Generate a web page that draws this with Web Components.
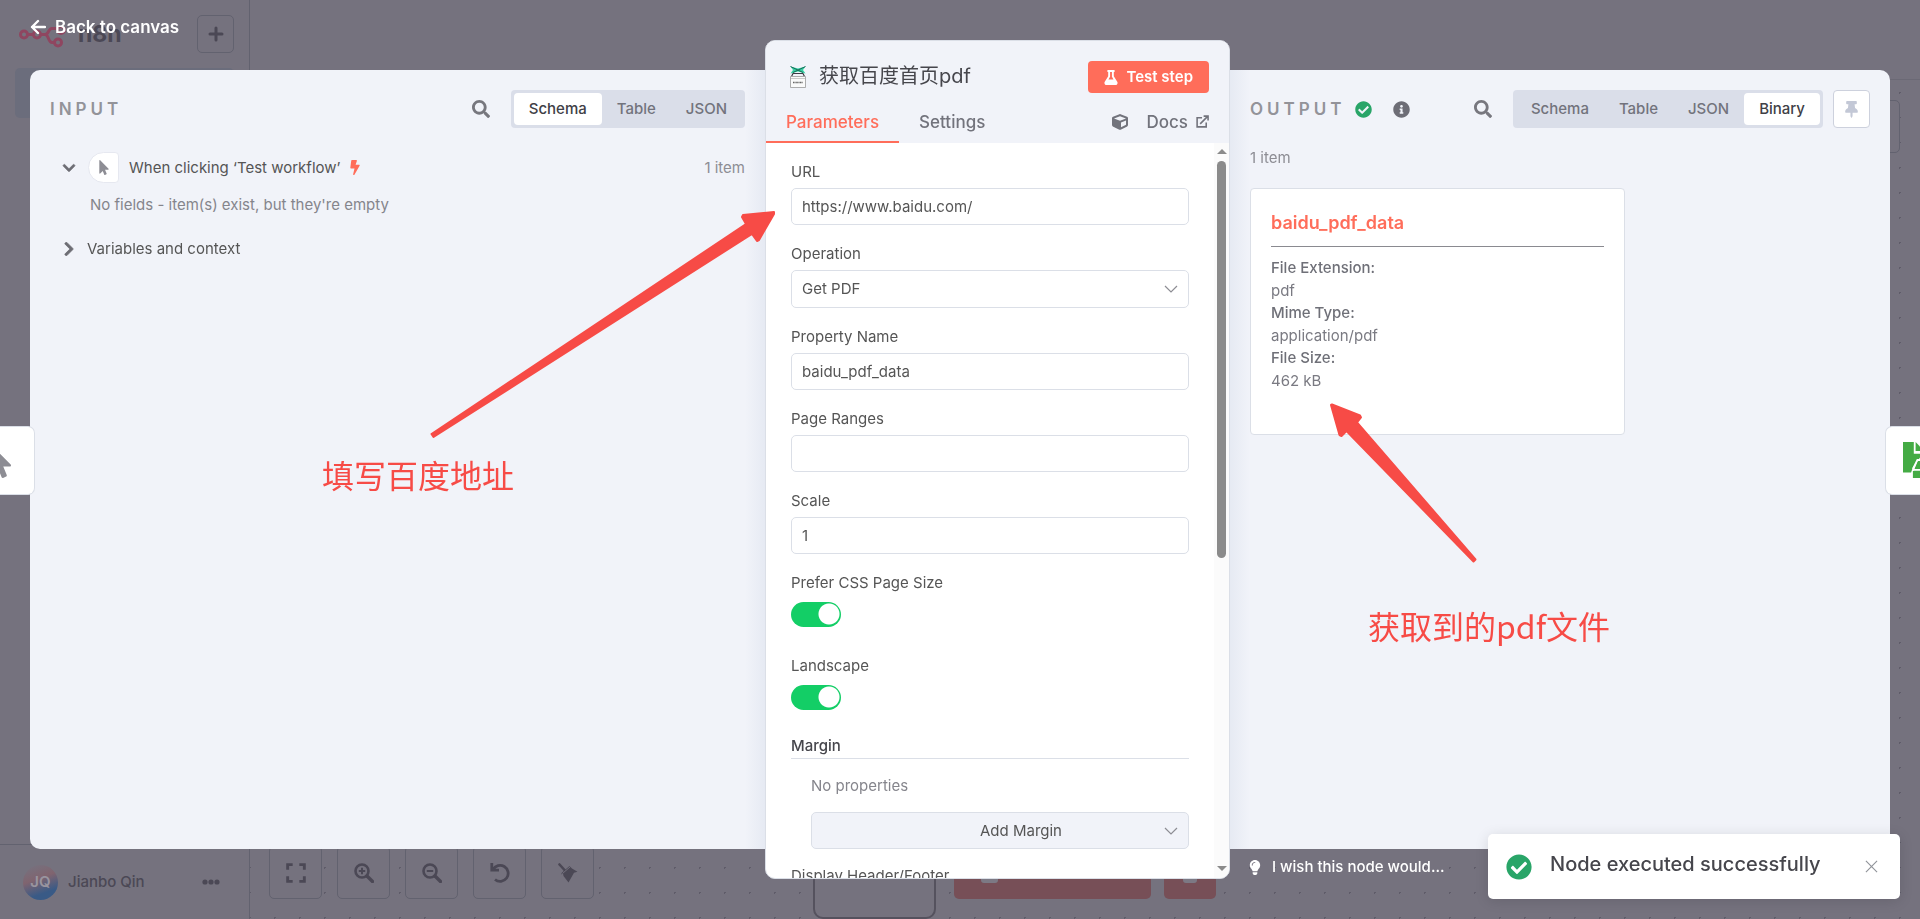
<!DOCTYPE html>
<html lang="en">
<head>
<meta charset="utf-8">
<title>n8n</title>
<style>
  html, body {
    height: 100%;
    margin: 0;
  }

  body {
    font-family: Inter, "Noto Sans CJK SC", sans-serif;
    font-size: 15px;
    line-height: 20px;
    color: #555;
    background: #75727e;
    overflow: hidden;
    --primary: #ff6d5a;
    --border: #dbdfe7;
    --pane: #f1f3f9;
    --dim: #75727e;
    --dim-line: #62626f;
    --dim-ink: #4b4855;
  }
</style>
</head>
<body>
<app-shell></app-shell>
<node-details></node-details>
<toast-message>Node executed successfully</toast-message>

<script>
const ICONS = {
  search: ["0 0 512 512", '<path d="M505 442.7L405.3 343c-4.5-4.5-10.6-7-17-7H372c27.6-35.3 44-79.7 44-128C416 93.1 322.9 0 208 0S0 93.1 0 208s93.1 208 208 208c48.3 0 92.7-16.4 128-44v16.3c0 6.4 2.5 12.5 7 17l99.7 99.7c9.4 9.4 24.6 9.4 33.9 0l28.3-28.3c9.4-9.4 9.4-24.6.1-34zM208 336c-70.7 0-128-57.2-128-128 0-70.7 57.2-128 128-128 70.7 0 128 57.2 128 128 0 70.7-57.2 128-128 128z"/>'],
  check: ["0 0 512 512", '<path d="M504 256c0 136.967-111.033 248-248 248S8 392.967 8 256 119.033 8 256 8s248 111.033 248 248zM227.314 387.314l184-184c6.248-6.248 6.248-16.379 0-22.627l-22.627-22.627c-6.248-6.249-16.379-6.249-22.628 0L216 308.118l-70.059-70.059c-6.248-6.248-16.379-6.248-22.628 0l-22.627 22.627c-6.248 6.248-6.248 16.379 0 22.627l104 104c6.249 6.249 16.379 6.249 22.628.001z"/>'],
  info: ["0 0 512 512", '<path d="M256 8C119.043 8 8 119.083 8 256c0 136.997 111.043 248 248 248s248-111.003 248-248C504 119.083 392.957 8 256 8zm0 110c23.196 0 42 18.804 42 42s-18.804 42-42 42-42-18.804-42-42 18.804-42 42-42zm56 254c0 6.627-5.373 12-12 12h-88c-6.627 0-12-5.373-12-12v-24c0-6.627 5.373-12 12-12h12v-64h-12c-6.627 0-12-5.373-12-12v-24c0-6.627 5.373-12 12-12h64c6.627 0 12 5.373 12 12v100h12c6.627 0 12 5.373 12 12v24z"/>'],
  flask: ["0 0 448 512", '<path d="M437.2 403.5L320 215V64h8c13.3 0 24-10.7 24-24V24c0-13.3-10.7-24-24-24H120c-13.3 0-24 10.7-24 24v16c0 13.3 10.7 24 24 24h8v151L10.8 403.5C-18.5 450.6 15.3 512 70.9 512h306.2c55.7 0 89.4-61.5 60.1-108.5zM137.9 320l48.2-77.6c3.7-5.2 5.8-11.6 5.8-18.4V64h64v160c0 6.9 2.2 13.2 5.8 18.4l48.2 77.6h-172z"/>'],
  bolt: ["0 0 320 512", '<path d="M296 160H180.6l42.6-129.8C227.2 15 215.7 0 200 0H56C44 0 33.8 8.9 32.2 20.8l-32 240C-1.7 275.2 9.5 288 24 288h118.7L96.6 482.5c-3.6 15.2 8 29.5 23.3 29.5 8.4 0 16.4-4.4 20.8-12l176-304c9.3-15.9-2.2-36-20.7-36z"/>'],
  pointer: ["0 0 320 512", '<path d="M302.189 329.126H196.105l55.831 135.993c3.889 9.428-.555 19.999-9.444 23.999l-49.165 21.427c-9.165 4-19.443-.571-23.332-9.714l-53.053-129.136-86.664 89.138C18.729 472.71 0 463.554 0 447.977V18.299C0 1.899 19.921-6.096 30.277 5.443l284.412 292.542c11.472 11.179 3.007 31.141-12.5 31.141z"/>'],
  cube: ["0 0 512 512", '<path d="M239.1 6.3l-208 78c-18.7 7-31.1 25-31.1 45v225.1c0 18.2 10.3 34.8 26.5 42.9l208 104c13.5 6.8 29.4 6.8 42.9 0l208-104c16.3-8.1 26.5-24.8 26.5-42.9V129.3c0-20-12.4-37.9-31.1-44.9l-208-78C262 2.2 250 2.2 239.1 6.3zM256 68.4l192 72v1.1l-192 78-192-78v-1.1l192-72zm32 356V275.5l160-65v133.9l-160 80z"/>'],
  pin: ["0 0 384 512", '<path d="M298.028 214.267L285.793 96H328c13.255 0 24-10.745 24-24V24c0-13.255-10.745-24-24-24H56C42.745 0 32 10.745 32 24v48c0 13.255 10.745 24 24 24h42.207L85.972 214.267C37.465 236.82 0 277.261 0 328c0 13.255 10.745 24 24 24h136v104.007c0 1.242.289 2.467.845 3.578l24 48c2.941 5.882 11.364 5.893 14.311 0l24-48a8.008 8.008 0 0 0 .845-3.578V352h136c13.255 0 24-10.745 24-24-.001-51.183-37.983-91.42-85.973-113.733z"/>'],
  bulb: ["0 0 352 512", '<path d="M96.06 454.35c.01 6.29 1.87 12.45 5.36 17.69l17.09 25.69a31.99 31.99 0 0 0 26.64 14.28h61.71a31.99 31.99 0 0 0 26.64-14.28l17.09-25.69a31.989 31.989 0 0 0 5.36-17.69l.04-38.35H96.01l.05 38.35zM0 176c0 44.37 16.45 84.85 43.56 115.78 16.52 18.85 42.36 58.23 52.21 91.45.04.26.07.52.11.78h160.24c.04-.26.07-.51.11-.78 9.85-33.22 35.69-72.6 52.21-91.45C335.55 260.85 352 220.37 352 176 352 78.61 272.91-.3 175.45 0 73.44.31 0 82.97 0 176zm176-80c-44.11 0-80 35.89-80 80 0 8.84-7.16 16-16 16s-16-7.16-16-16c0-61.76 50.24-112 112-112 8.84 0 16 7.16 16 16s-7.16 16-16 16z"/>'],
  down: ["0 0 448 512", '<path d="M207.029 381.476L12.686 187.132c-9.373-9.373-9.373-24.569 0-33.941l22.667-22.667c9.357-9.357 24.522-9.375 33.901-.04L224 284.505l154.745-154.021c9.379-9.335 24.544-9.317 33.901.04l22.667 22.667c9.373 9.373 9.373 24.569 0 33.941L240.971 381.476c-9.373 9.372-24.569 9.372-33.942 0z" stroke="currentColor" stroke-width="24"/>'],
  right: ["0 0 512 448", '<path transform="rotate(-90 224 224)" d="M207.029 381.476L12.686 187.132c-9.373-9.373-9.373-24.569 0-33.941l22.667-22.667c9.357-9.357 24.522-9.375 33.901-.04L224 284.505l154.745-154.021c9.379-9.335 24.544-9.317 33.901.04l22.667 22.667c9.373 9.373 9.373 24.569 0 33.941L240.971 381.476c-9.373 9.372-24.569 9.372-33.942 0z" stroke="currentColor" stroke-width="24"/>'],
  back: ["0 0 16 16", '<path d="M8 2L2 8l6 6M2 8h13" fill="none" stroke="currentColor" stroke-width="2.4" stroke-linecap="round" stroke-linejoin="round"/>'],
  external: ["0 0 14 14", '<path d="M6.5 3H1.2v9.800h9.800V8M4.500 9.500L12 2M8.200 1.200h4.800V6" fill="none" stroke="currentColor" stroke-width="1.700"/>'],
  caret: ["0 0 14 8", '<path d="M1 1l6 6 6-6" fill="none" stroke="currentColor" stroke-width="1.200"/>'],
  close: ["0 0 14 14", '<path d="M1 1l12 12M13 1L1 13" fill="none" stroke="currentColor" stroke-width="1.200"/>'],
  plus: ["0 0 16 16", '<path d="M8 2v12M2 8h12" stroke="currentColor" stroke-width="3" stroke-linecap="round"/>'],
  fit: ["0 0 18 18", '<path d="M1.500 6V1.500H6M12 1.500h4.500V6M16.500 12v4.500H12M6 16.500H1.500V12" fill="none" stroke="currentColor" stroke-width="2.600"/>'],
  zoomIn: ["0 0 20 20", '<path d="M13 13l5.500 5.500" stroke="currentColor" stroke-width="3.400" stroke-linecap="round"/><circle cx="8" cy="8" r="6.500" fill="none" stroke="currentColor" stroke-width="2.600"/><path d="M8 4.800v6.400M4.800 8h6.400" stroke="currentColor" stroke-width="2"/>'],
  zoomOut: ["0 0 20 20", '<path d="M13 13l5.500 5.500" stroke="currentColor" stroke-width="3.400" stroke-linecap="round"/><circle cx="8" cy="8" r="6.500" fill="none" stroke="currentColor" stroke-width="2.600"/><path d="M4.800 8h6.400" stroke="currentColor" stroke-width="2"/>'],
  undo: ["0 0 20 20", '<path d="M1.800 0v7.200H9M3 6.800A8 8 0 1 1 5 16.500" fill="none" stroke="currentColor" stroke-width="2.800"/><path d="M1 3l5 5H1z"/>'],
  tidy: ["0 0 20 20", '<path d="M1.500 1.500l5 5.500" stroke="currentColor" stroke-width="2.600" stroke-linecap="round"/><path d="M4 9.500L11.500 3l2.500 2.500 5.500 3.300-3.500 1-5.500 9.700-5-6.500-.5-2.500-2 1z"/><path d="M4.500 10.500l8-7" stroke="#75727e" stroke-width="1"/>'],
  dots: ["0 0 18 6", '<circle cx="3" cy="3" r="2.600"/><circle cx="9" cy="3" r="2.600"/><circle cx="15" cy="3" r="2.600"/>'],
  browser: ["0 0 16 22", '<path d="M.5.5L8 2.500 15.500.5 13 4l2.500 3.500L8 5.500.5 7.500 3 4z" fill="#35cfa2"/><path d="M.5.500L13 6.500M15.500.500L3 6.500" stroke="#1b6b58" stroke-width="1"/><path d="M1.500 10.500L3 7.500h10l1.500 3" fill="none" stroke="#3c3c44" stroke-width="1.200"/><path d="M.5 10.500h15v11H.5z" fill="#fafafa" stroke="#999" stroke-width=".8"/><path d="M.5 12.500h15" stroke="#aaa" stroke-width=".6"/><path d="M3 16.500h10" stroke="#666" stroke-width="1.300" stroke-dasharray="1 .4"/>'],
  logo: ["0 0 48 22", '<g fill="none" stroke="currentColor" stroke-width="3"><circle cx="5" cy="7.500" r="3.500"/><circle cx="18" cy="7.500" r="3.500"/><circle cx="39" cy="15.500" r="3.500"/><circle cx="42" cy="3" r="3.500"/><path d="M8.500 7.500h6M21.500 7.500H26c4 0 3-6 7-6h5M26 7.500c4 0 3 8 7 8h2.500"/></g>'],
  file: ["0 0 40 40", '<g fill="#44ab44"><path d="M0 0h12v13h10l-5 7-6 8-2 6H0z"/><path d="M14 0l10 10H14z"/><path d="M12 32l5-13h24v21H11v-8z"/></g><path d="M11 30l5-10h25M11 31h30" fill="none" stroke="#fff" stroke-width="2"/>']
};

// fill a shadow root with the given styles and markup
function render(host, css, html) {
  const root = host.attachShadow({ mode: "open" });
  root.innerHTML = `<style>* { box-sizing: border-box; } button, input, select { font: inherit; color: inherit; margin: 0; } ${css}</style>${html}`;
  return root;
}

class UiIcon extends HTMLElement {
  constructor() {
    super();
    this.attachShadow({ mode: "open" });
  }

  connectedCallback() {
    const [box, shape] = ICONS[this.getAttribute("name")];
    this.shadowRoot.innerHTML = `
      <style>
        :host { display: inline-flex; width: 18px; height: 18px; flex: none; }
        svg { width: 100%; height: 100%; fill: currentColor; }
      </style>
      <svg viewBox="${box}" aria-hidden="true">${shape}</svg>`;
  }
}
customElements.define("ui-icon", UiIcon);

/* page behind the dialog */
class AppShell extends HTMLElement {
  constructor() {
    super();
    render(this, `
      :host { display: grid; grid-template-columns: 250px 1fr; height: 100%; color: var(--dim-ink); }
      aside { display: flex; flex-direction: column; border-right: 1px solid var(--dim-line); min-width: 0; }
      .brand { display: flex; align-items: center; padding: 15px 15px 15px 19px; height: 68px; }
      .brand ui-icon { width: 48px; height: 22px; color: #8f4660; margin-top: 8px; }
      .brand b { flex: 1; margin-left: 11px; font-size: 23px; line-height: 38px; }
      .brand button { width: 37px; height: 38px; }
      .brand button ui-icon { width: 16px; height: 16px; color: inherit; margin: 0; }
      button { display: grid; place-items: center; background: none; border: 1px solid var(--dim-line); border-radius: 5px; padding: 0; }
      .current { height: 50px; margin: 0 15px; background: #6b6d7c; border-radius: 5px; }
      .user { margin-top: auto; height: 75px; border-top: 1px solid var(--dim-line); display: flex; align-items: center; gap: 10px; padding: 0 29px 0 23px; font-weight: 500; }
      .user i { width: 35px; height: 35px; border-radius: 50%; background: linear-gradient(160deg, #77707d 10%, #80646f 40%, #395a86 75%); display: grid; place-items: center; color: #99949f; font-style: normal; font-weight: 600; }
      .user span { flex: 1; }
      .user ui-icon { width: 18px; height: 6px; }
      main { display: flex; flex-direction: column; min-width: 0; }
      header { height: 80px; border-bottom: 1px solid #6b6975; }
      .canvas { flex: 1; display: flex; align-items: flex-end; position: relative; padding: 0 0 20px 19px; background: radial-gradient(circle, #5f5c69 1px, transparent 1px) 12px 0 / 25px 25px; }
      nav { display: flex; gap: 15px; }
      nav button { width: 53px; height: 53px; background: var(--dim); }
      nav ui-icon { width: 20px; height: 20px; }
      .node { position: absolute; left: 563px; bottom: 0; width: 123px; height: 120px; border: 2px solid #55525e; border-radius: 10px; background: var(--dim); }
      .run { position: absolute; left: 704px; bottom: 20px; display: flex; gap: 13px; }
      .run button { width: 197px; height: 52px; padding: 0 27px; border: 0; background: #774f57; justify-items: start; }
      .run button + button { width: 52px; padding: 0 19px; }
      .run i { width: 17px; height: 20px; border-radius: 3px; background: #7c7984; }
      .run button + button i { width: 14px; }
      .add { position: absolute; right: 20px; top: 20px; width: 53px; height: 53px; }
    `, `
      <aside>
        <div class="brand"><ui-icon name="logo"></ui-icon><b>n8n</b><button aria-label="Add"><ui-icon name="plus"></ui-icon></button></div>
        <div class="current"></div>
        <div class="user"><i>JQ</i><span>Jianbo Qin</span><ui-icon name="dots"></ui-icon></div>
      </aside>
      <main>
        <header></header>
        <div class="canvas">
          <nav>
            <button aria-label="Fit view"><ui-icon name="fit"></ui-icon></button>
            <button aria-label="Zoom in"><ui-icon name="zoomIn"></ui-icon></button>
            <button aria-label="Zoom out"><ui-icon name="zoomOut"></ui-icon></button>
            <button aria-label="Reset zoom"><ui-icon name="undo"></ui-icon></button>
            <button aria-label="Tidy up"><ui-icon name="tidy"></ui-icon></button>
          </nav>
          <div class="node"></div>
          <div class="run"><button aria-label="Test workflow"><i></i></button><button aria-label="Delete execution"><i></i></button></div>
          <button class="add" aria-label="Open nodes panel"></button>
        </div>
      </main>`);
  }
}
customElements.define("app-shell", AppShell);

/* Schema / Table / JSON switch */
class ViewSwitch extends HTMLElement {
  connectedCallback() {
    const active = this.getAttribute("active");
    const items = this.getAttribute("items").split(",");
    render(this, `
      :host { display: flex; height: 38px; padding: 3px; border-radius: 4px; background: #dadee9; }
      button { border: 0; background: none; border-radius: 4px; padding: 0 15px; font-weight: 500; color: #72737c; }
      button[aria-pressed="true"] { background: #fff; color: #404046; }
    `, items.map(t => `<button aria-pressed="${t === active}">${t}</button>`).join(""));
  }
}
customElements.define("view-switch", ViewSwitch);

class DataPane extends HTMLElement {
  connectedCallback() {
    render(this, `
      :host { display: block; padding: 20px; min-width: 0; }
      header { display: flex; align-items: center; height: 38px; }
      h2 { margin: 0; font-size: 17px; font-weight: 600; letter-spacing: 4px; color: #939399; }
      .find { border: 0; background: none; padding: 0; margin-left: auto; margin-right: 21px; display: flex; color: #77777e; }
    `, `
      <header>
        <h2>${this.getAttribute("heading")}</h2>
        <slot name="status"></slot>
        <button class="find" aria-label="Search"><ui-icon name="search"></ui-icon></button>
        <slot name="tools"></slot>
      </header>
      <slot></slot>`);
  }
}
customElements.define("data-pane", DataPane);

class SchemaTree extends HTMLElement {
  constructor() {
    super();
    render(this, `
      :host { display: block; padding: 24px 0 0 11px; }
      .row { display: flex; align-items: center; }
      .chev { width: 16px; height: 14px; color: #6d6d74; }
      .node { width: 31px; height: 31px; margin: 0 10px 0 11px; display: grid; place-items: center; background: #fff; border: 1px solid #e6e8f0; border-radius: 16px 4px 4px 16px; color: #8d8d94; }
      .node ui-icon { width: 10px; height: 15px; }
      .bolt { width: 10px; height: 15px; margin-left: 10px; color: var(--primary); }
      .count { margin-left: auto; color: #8d8d94; }
      p { margin: 12px 0 24px 29px; color: #85858c; }
      .vars { margin-left: 10px; }
    `, `
      <div class="row">
        <ui-icon class="chev" name="down"></ui-icon>
        <div class="node"><ui-icon name="pointer"></ui-icon></div>
        <span>When clicking ‘Test workflow’</span>
        <ui-icon class="bolt" name="bolt"></ui-icon>
        <span class="count">1 item</span>
      </div>
      <p>No fields - item(s) exist, but they're empty</p>
      <div class="row"><ui-icon class="chev" name="right"></ui-icon><span class="vars">Variables and context</span></div>`);
  }
}
customElements.define("schema-tree", SchemaTree);

class BinaryCard extends HTMLElement {
  connectedCallback() {
    render(this, `
      :host { display: block; max-width: 375px; height: 247px; padding: 20px; background: #fff; border: 1px solid var(--border); border-radius: 4px; color: #7a7a82; }
      h3 { margin: 0 0 10px; padding: 3px 0 12px; font-size: 18px; line-height: 22px; font-weight: 600; color: var(--primary); border-bottom: 1px solid #8a8a90; }
      dl { margin: 0; }
      dt { font-weight: 500; line-height: 22px; color: #6f7078; }
      dd { margin: 0; line-height: 23px; }
    `, `
      <h3>${this.getAttribute("heading")}</h3>
      <dl><dt>File Extension:</dt><dd>pdf</dd><dt>Mime Type:</dt><dd>application/pdf</dd><dt>File Size:</dt><dd>462 kB</dd></dl>`);
  }
}
customElements.define("binary-card", BinaryCard);

/* one labelled parameter: text, select or switch */
class ParamField extends HTMLElement {
  connectedCallback() {
    const type = this.getAttribute("type") || "text";
    const value = this.getAttribute("value") || "";
    let control = `<input id="c" type="text" value="${value}">`;
    if (type === "select") {
      control = `<div class="select"><select id="c"><option>${value}</option></select><ui-icon name="caret"></ui-icon></div>`;
    } else if (type === "switch") {
      control = `<input id="c" type="checkbox" role="switch" checked>`;
    }
    render(this, `
      :host { display: block; margin-bottom: 19px; }
      :host([type="switch"]) { margin-bottom: 26px; }
      :host([type="switch"]) label { margin-bottom: 9px; }
      label { display: block; margin-bottom: 6px; }
      input[type="text"], select { display: block; width: 100%; height: 37px; padding: 0 10px; border: 1px solid var(--border); border-radius: 5px; background: #fff; outline: 0; }
      select { height: 38px; appearance: none; }
      .select { position: relative; }
      .select ui-icon { position: absolute; right: 11px; top: 15px; width: 14px; height: 8px; color: #8d8d94; }
      input[type="checkbox"] { display: block; appearance: none; width: 50px; height: 25px; border-radius: 13px; background: radial-gradient(circle at 38px 12px, #fff 10px, transparent 11px) #13ce66; }
    `, `<label for="c">${this.getAttribute("label")}</label>${control}`);
  }
}
customElements.define("param-field", ParamField);

class NodePanel extends HTMLElement {
  constructor() {
    super();
    render(this, `
      :host { display: flex; flex-direction: column; background: #fff; border: 1px solid var(--border); border-radius: 10px; overflow: hidden; }
      header { background: var(--pane); flex: none; height: 102px; display: flex; flex-direction: column; justify-content: space-between; }
      .title { display: flex; align-items: center; padding: 20px 20px 0 24px; }
      .title > ui-icon { width: 16px; height: 22px; }
      h1 { flex: 1; margin: 0 0 2px 13px; font-size: 20px; line-height: 28px; font-weight: 400; color: #46464c; }
      .title button { display: flex; align-items: center; gap: 8px; height: 32px; padding: 0 16px; border: 0; border-radius: 4px; background: var(--primary); color: #fff; font-weight: 600; }
      .title button ui-icon { width: 14px; height: 15px; }
      nav { display: flex; align-items: center; font-size: 17px; font-weight: 500; color: #72737c; padding-right: 20px; }
      nav button { border: 0; border-bottom: 2px solid transparent; background: none; padding: 2px 20px 0; height: 43px; }
      nav button[aria-selected="true"] { color: var(--primary); border-color: var(--primary); }
      nav > ui-icon { width: 16px; height: 16px; margin-left: auto; margin-right: 18px; }
      nav a { display: flex; align-items: center; gap: 8px; color: inherit; text-decoration: none; }
      nav a ui-icon { width: 13px; height: 13px; }
      .body { flex: 1; min-height: 0; display: flex; }
      form { flex: 1; min-width: 0; overflow: hidden; padding: 19px 25px 0; }
      .track { flex: none; width: 15px; background: #fbfbfb; display: flex; flex-direction: column; align-items: center; padding: 6px 0 7px; }
      .track::before, .track::after { content: ""; border: 5px solid transparent; border-top-width: 0; border-bottom-color: #8b8b8b; }
      .track::after { border-width: 5px; border-bottom-width: 0; border-color: transparent; border-top-color: #8b8b8b; margin-top: auto; }
      .thumb { width: 9px; height: 55%; margin-top: 7px; border-radius: 5px; background: #8b8b8b; }
      param-field[type="switch"] + param-field { margin-top: 29px; }
      h4 { margin: 0; font-weight: 500; color: #46464c; border-bottom: 1px solid var(--border); padding-bottom: 2px; }
      .group { padding: 17px 0 17px 20px; }
      p { margin: 0 0 16px; color: #85858c; }
      .pick { position: relative; }
      .pick select { width: 100%; height: 37px; appearance: none; border: 1px solid var(--border); border-radius: 5px; background: var(--pane); text-align: center; text-align-last: center; padding: 0 10px 0 52px; }
      .pick ui-icon { position: absolute; right: 11px; top: 15px; width: 14px; height: 8px; color: #8d8d94; }
    `, `
      <header>
        <div class="title">
          <ui-icon name="browser"></ui-icon>
          <h1>获取百度首页pdf</h1>
          <button><ui-icon name="flask"></ui-icon>Test step</button>
        </div>
        <nav>
          <button role="tab" aria-selected="true">Parameters</button>
          <button role="tab" aria-selected="false">Settings</button>
          <ui-icon name="cube"></ui-icon>
          <a href="#docs">Docs<ui-icon name="external"></ui-icon></a>
        </nav>
      </header>
      <div class="body">
        <form>
          <param-field label="URL" value="https://www.baidu.com/"></param-field>
          <param-field label="Operation" type="select" value="Get PDF"></param-field>
          <param-field label="Property Name" value="baidu_pdf_data"></param-field>
          <param-field label="Page Ranges"></param-field>
          <param-field label="Scale" value="1"></param-field>
          <param-field label="Prefer CSS Page Size" type="switch"></param-field>
          <param-field label="Landscape" type="switch"></param-field>
          <h4>Margin</h4>
          <div class="group">
            <p>No properties</p>
            <div class="pick"><select aria-label="Add Margin"><option>Add Margin</option></select><ui-icon name="caret"></ui-icon></div>
          </div>
          <param-field label="Display Header/Footer" type="switch"></param-field>
        </form>
        <div class="track"><div class="thumb"></div></div>
      </div>`);
  }
}
customElements.define("node-panel", NodePanel);

/* red arrows and notes drawn over the dialog */
class MarkupLayer extends HTMLElement {
  constructor() {
    super();
    render(this, `
      :host { position: absolute; inset: 0; pointer-events: none; color: #f74b46; font-size: 32px; line-height: 40px; font-family: "Noto Sans CJK SC", sans-serif; }
      svg { position: absolute; left: 0; top: 0; width: 1920px; height: 919px; fill: currentColor; stroke: currentColor; stroke-width: 2; stroke-linejoin: round; }
      span { position: absolute; white-space: nowrap; }
      .url { left: 322px; top: 454px; }
      .file { left: 1368px; top: 605px; }
    `, `
      <svg viewBox="0 0 1920 919" aria-hidden="true">
        <path d="M431.500 434L746 224l-4-7 1-2 31-3v2l-15 26-2 1-5-7L433.500 437z"/>
        <path d="M1332 404.500l28 11 1 2-4 5 118.500 137-2 2L1346.500 431l-5 5-2-1-8.500-30z"/>
      </svg>
      <span class="url">填写百度地址</span>
      <span class="file">获取到的pdf文件</span>`);
  }
}
customElements.define("markup-layer", MarkupLayer);

class NodeDetails extends HTMLElement {
  constructor() {
    super();
    render(this, `
      :host { position: fixed; inset: 0; display: grid; grid-template-columns: 735px 465px 1fr; padding: 40px 30px; }
      .back { position: absolute; left: 30px; top: 14px; display: flex; align-items: center; gap: 9px; padding: 0; border: 0; background: none; color: #fff; font-size: 17px; line-height: 26px; font-weight: 600; }
      .back ui-icon { width: 16px; height: 16px; }
      data-pane { margin: 30px 0; background: linear-gradient(to left, #e6eaf3, #f1f3f9 20px); border-radius: 10px 0 0 10px; }
      data-pane.out { background: linear-gradient(to right, #e6eaf3, #f1f3f9 20px); border-radius: 0 10px 10px 0; }
      .ok, .note { width: 17px; height: 17px; }
      .ok { color: #29a568; margin-left: 9px; }
      .note { color: #6d6d76; margin-left: 21px; }
      .pin { width: 37px; height: 38px; margin-left: 10px; display: grid; place-items: center; padding: 0; background: #fff; border: 1px solid #cdd1dd; border-radius: 4px; color: #c3c8d6; }
      .pin ui-icon { width: 13px; height: 17px; }
      .count { margin: 20px 0; color: #8d8d94; }
      .tab { position: absolute; top: 426px; width: 35px; height: 69px; display: flex; align-items: center; background: #fff; border: 1px solid var(--border); overflow: hidden; padding: 0; color: #8d8d94; }
      .prev { left: 0; border-left: 0; border-radius: 0 7px 7px 0; }
      .prev ui-icon { width: 26px; height: 32px; margin-left: -12px; margin-top: 3px; }
      .next { right: 0; border-right: 0; border-radius: 7px 0 0 7px; padding-left: 15px; }
      .next ui-icon { width: 40px; height: 36px; margin-top: -2px; }
      .wish { position: absolute; left: 1249px; bottom: 40px; display: flex; align-items: center; gap: 11px; color: #fff; text-decoration: none; line-height: 24px; font-weight: 500; }
      .wish ui-icon { width: 12px; height: 15px; }
    `, `
      <button class="back"><ui-icon name="back"></ui-icon>Back to canvas</button>
      <data-pane heading="INPUT">
        <view-switch slot="tools" items="Schema,Table,JSON" active="Schema"></view-switch>
        <schema-tree></schema-tree>
      </data-pane>
      <node-panel></node-panel>
      <data-pane class="out" heading="OUTPUT">
        <ui-icon slot="status" class="ok" name="check"></ui-icon>
        <ui-icon slot="status" class="note" name="info"></ui-icon>
        <view-switch slot="tools" items="Schema,Table,JSON,Binary" active="Binary"></view-switch>
        <button slot="tools" class="pin" aria-label="Pin data"><ui-icon name="pin"></ui-icon></button>
        <div class="count">1 item</div>
        <binary-card heading="baidu_pdf_data"></binary-card>
      </data-pane>
      <button class="tab prev" aria-label="Previous node"><ui-icon name="pointer"></ui-icon></button>
      <button class="tab next" aria-label="Next node"><ui-icon name="file"></ui-icon></button>
      <a class="wish" href="#feedback"><ui-icon name="bulb"></ui-icon>I wish this node would...</a>
      <markup-layer></markup-layer>`);
  }
}
customElements.define("node-details", NodeDetails);

class ToastMessage extends HTMLElement {
  constructor() {
    super();
    render(this, `
      :host { box-sizing: border-box; position: fixed; right: 20px; bottom: 20px; width: 412px; height: 65px; padding: 0 22px 0 18px; display: flex; align-items: center; background: #fff; border-radius: 5px; box-shadow: 0 2px 14px rgba(0, 0, 0, .12); color: #46464c; }
      .ok { width: 26px; height: 26px; color: #29a568; }
      strong { flex: 1; margin-left: 18px; margin-bottom: 5px; font-size: 20px; line-height: 26px; font-weight: 500; }
      button { display: flex; padding: 0; border: 0; background: none; color: #909399; }
      button ui-icon { width: 13px; height: 13px; }
    `, `
      <ui-icon class="ok" name="check"></ui-icon>
      <strong><slot></slot></strong>
      <button aria-label="Close"><ui-icon name="close"></ui-icon></button>`);
  }
}
customElements.define("toast-message", ToastMessage);
</script>
</body>
</html>
